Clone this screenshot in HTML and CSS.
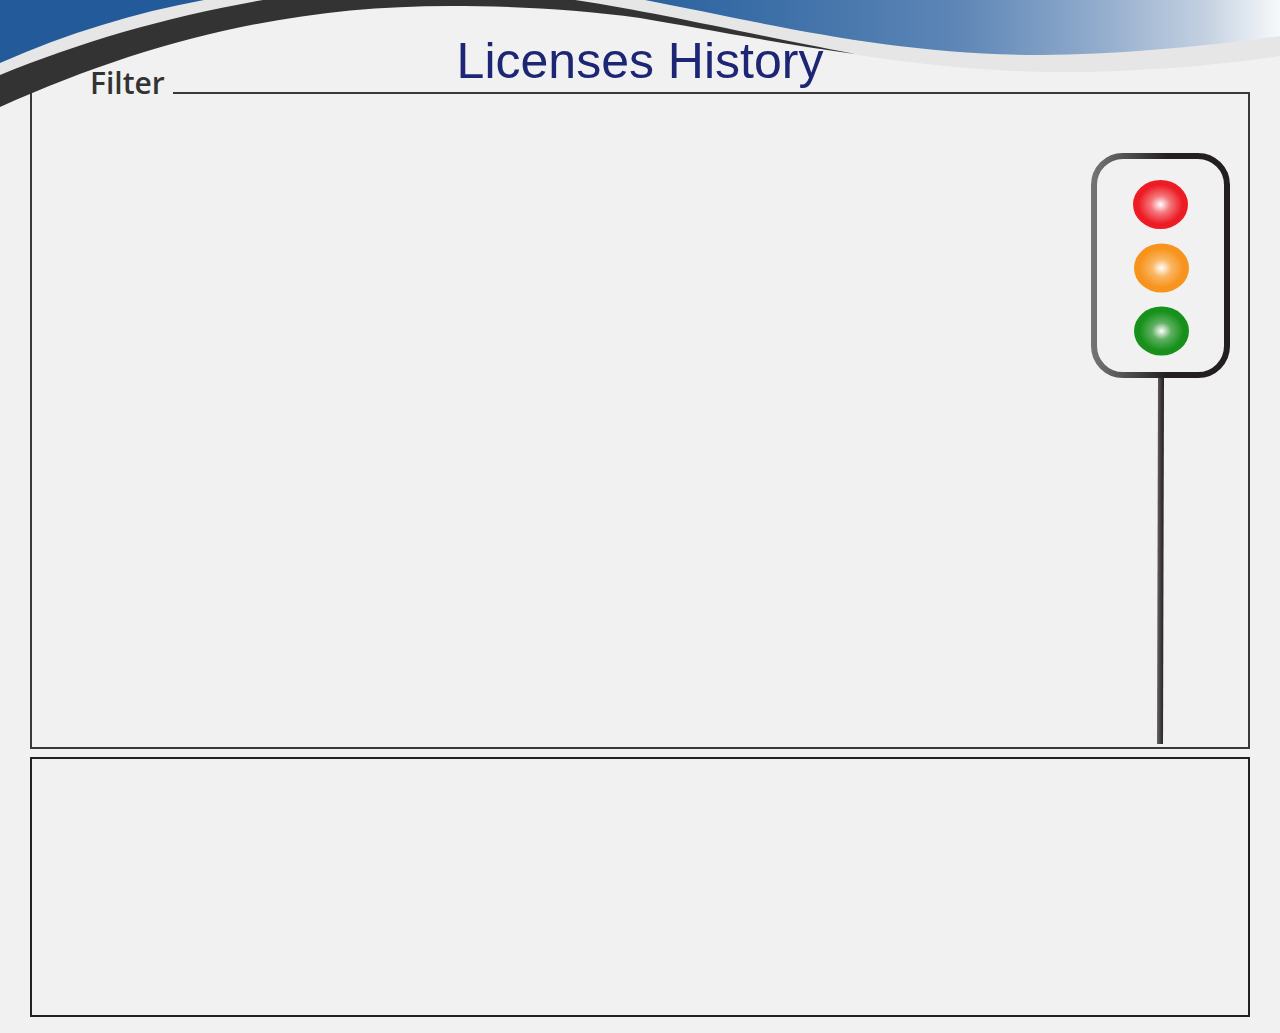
FILE: index.html
```html
<!DOCTYPE html>
<html lang="en">
<head>
<meta charset="utf-8">
<meta name="viewport" content="width=device-width, initial-scale=1">
<title>Licenses History</title>
<link rel="stylesheet" href="styles.css">
</head>
<body>
<header class="banner">
  <svg class="wave" viewBox="0 0 1280 108" preserveAspectRatio="none" aria-hidden="true">
    <defs>
      <linearGradient id="sky" gradientUnits="userSpaceOnUse" x1="645" y1="0" x2="1280" y2="0">
        <stop offset="0" stop-color="#2a629f"/>
        <stop offset=".25" stop-color="#4273aa"/>
        <stop offset=".5" stop-color="#5f87b7"/>
        <stop offset=".7" stop-color="#8ea9cb"/>
        <stop offset=".88" stop-color="#c3d0e1"/>
        <stop offset="1" stop-color="#f7f9fb"/>
      </linearGradient>
    </defs>
    <path fill="#e6e6e6" d="M0 0H1280V56C1205 67 1130 72 1060 72C985 72 915 64 845 53L560 0H300L0 80Z"/>
    <path fill="#333" d="M0 75C80 42 170 16 263 0H575C660 13 740 32 855 54C770 42 700 28 640 18C575 9 510 6 450 6C290 6 150 40 0 107Z"/>
    <path fill="#235a9a" d="M0 0V63C68 33 134 13 204 0Z"/>
    <path fill="url(#sky)" d="M645 0C760 22 890 55 1040 55C1115 55 1200 47 1280 36V0Z"/>
  </svg>
  <h1 class="title">Licenses History</h1>
</header>
<main class="page">
  <fieldset class="filter">
    <legend class="filter-name">Filter</legend>
    <svg class="signal" width="139" height="591" viewBox="0 0 139 591" role="img" aria-label="Traffic light">
      <defs>
        <linearGradient id="frame" gradientUnits="userSpaceOnUse" x1="0" y1="0" x2="139" y2="0">
          <stop offset="0" stop-color="#757575"/>
          <stop offset=".1" stop-color="#686868"/>
          <stop offset=".55" stop-color="#231f20"/>
          <stop offset="1" stop-color="#231f20"/>
        </linearGradient>
        <linearGradient id="pole">
          <stop offset="0" stop-color="#686566"/>
          <stop offset=".6" stop-color="#3b3738"/>
          <stop offset="1" stop-color="#231f20"/>
        </linearGradient>
        <radialGradient id="red">
          <stop offset="0" stop-color="#fff"/>
          <stop offset=".35" stop-color="#f4777c"/>
          <stop offset=".8" stop-color="#ed1c24"/>
        </radialGradient>
        <radialGradient id="amber">
          <stop offset="0" stop-color="#fff"/>
          <stop offset=".35" stop-color="#fab765"/>
          <stop offset=".8" stop-color="#f7941d"/>
        </radialGradient>
        <radialGradient id="green">
          <stop offset="0" stop-color="#fff"/>
          <stop offset=".35" stop-color="#60b062"/>
          <stop offset=".8" stop-color="#17911b"/>
        </radialGradient>
      </defs>
      <path fill="url(#pole)" d="M67 224H73L72 591H66Z"/>
      <rect x="3" y="3" width="133" height="219" rx="29" fill="none" stroke="url(#frame)" stroke-width="6"/>
      <ellipse cx="69.500" cy="51.500" rx="27.500" ry="24.500" fill="url(#red)"/>
      <ellipse cx="70.500" cy="115" rx="27.500" ry="24.500" fill="url(#amber)"/>
      <ellipse cx="70.500" cy="178" rx="27.500" ry="24.500" fill="url(#green)"/>
    </svg>
  </fieldset>
  <section class="results" aria-label="Results"></section>
</main>
</body>
</html>
```
FILE: styles.css
```css
* {
  box-sizing: border-box;
}

body {
  margin: 0;
  background: #f1f1f1;
  color: #333;
  font-family: "Open Sans", sans-serif;
}

/* The banner lies over the top corner of the filter frame. */
.banner {
  position: absolute;
  top: 0;
  left: 0;
  width: 100%;
  padding-top: 33px;
  pointer-events: none;
}

.wave {
  position: absolute;
  top: 0;
  left: 0;
  width: 100%;
  height: 108px;
}

.title {
  position: relative;
  margin: 0;
  color: #1c2674;
  font: 400 50px/56px "Liberation Sans", Arial, sans-serif;
  text-align: center;
}

.page {
  display: flex;
  flex-direction: column;
  gap: 8px;
  min-height: 100vh;
  padding: 69px 30px 16px;
}

.filter {
  display: flex;
  justify-content: flex-end;
  min-width: 0;
  margin: 0;
  padding: 36px 18px 3px 0;
  border: 2px solid #3a3839;
}

/* The wide left padding keeps the frame open beside the name. */
.filter-name {
  padding: 0 8px 20px 58px;
  font-size: 30px;
  font-weight: 600;
  line-height: 28px;
}

.signal {
  display: block;
}

.results {
  flex: 1;
  min-height: 200px;
  border: 2px solid #222;
}
```
